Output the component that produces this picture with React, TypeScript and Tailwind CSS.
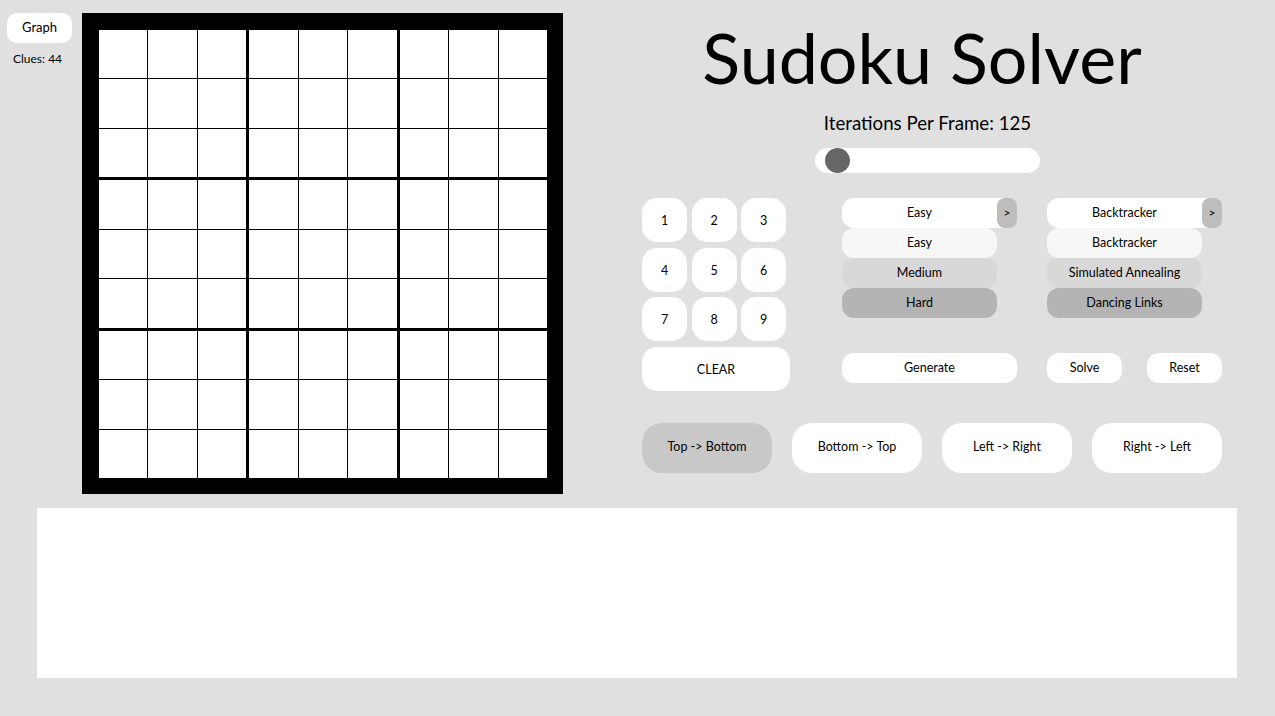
import React from 'react';

const nums = [1, 2, 3, 4, 5, 6, 7, 8, 9];

function Board() {
    return (
        <div className="w-[481px] h-[481px] bg-black pl-[17px] pt-[17px] pr-[16px] pb-[16px]">
            <div className="grid grid-cols-3 gap-[3px] w-[448px] h-[448px]">
                {Array.from({ length: 9 }).map((_, b) => (
                    <div key={b} className="grid grid-cols-3 grid-rows-3 gap-px">
                        {Array.from({ length: 9 }).map((_, c) => (
                            <div key={c} className="bg-white" />
                        ))}
                    </div>
                ))}
            </div>
        </div>
    );
}

function Dropdown({ value, options }: { value: string; options: string[] }) {
    const shades = ['bg-[#f7f7f7]', 'bg-[#d8d8d8]', 'bg-[#b4b4b4]'];
    return (
        <div className="w-[175px]">
            <div className="relative h-[30px] bg-white rounded-[12px] flex items-center">
                <span className="w-[155px] text-center">{value}</span>
                <span className="absolute right-0 top-0 w-[20px] h-[30px] bg-[#bdbdbd] rounded-[8px] flex items-center justify-center text-[12px]">
                    &gt;
                </span>
            </div>
            {options.map((o, i) => (
                <div
                    key={o}
                    className={`w-[155px] h-[30px] rounded-[12px] flex items-center justify-center ${shades[i]}`}
                >
                    {o}
                </div>
            ))}
        </div>
    );
}

export default function App() {
    const dirs = ['Top -> Bottom', 'Bottom -> Top', 'Left -> Right', 'Right -> Left'];

    return (
        <div className="w-[1275px] h-[716px] bg-[#e0e0e0] text-black font-['Lato',sans-serif] overflow-hidden">
            <div className="flex pt-[13px]">
                {/* Left column */}
                <div className="w-[82px] pl-[7px]">
                    <button className="w-[65px] h-[30px] bg-white rounded-[10px] text-[13px]">Graph</button>
                    <div className="mt-[7px] pl-[6px] text-[12px]">Clues: 44</div>
                </div>

                <Board />

                {/* Controls */}
                <div className="ml-[79px] w-[580px] flex flex-col">
                    <h1 className="pr-[20px] text-center text-[70px] leading-[88px] font-normal">Sudoku Solver</h1>
                    <div className="pr-[9px] mt-[10px] text-center text-[18.7px] leading-[24px]">Iterations Per Frame: 125</div>
                    <div className="ml-[173px] mt-[13px] w-[225px] h-[25px] bg-white rounded-full relative">
                        <div className="absolute left-[10px] top-0 w-[25px] h-[25px] rounded-full bg-[#666666]" />
                    </div>

                    <div className="flex mt-[25px] text-[12.5px]">
                        <div className="w-[148px]">
                            <div className="grid grid-cols-[45px_45px_45px] auto-rows-[44px] gap-x-[4.5px] gap-y-[5.5px]">
                                {nums.map(n => (
                                    <button key={n} className="bg-white rounded-[15px] leading-[46px]">{n}</button>
                                ))}
                            </div>
                            <button className="mt-[5.5px] w-[148px] h-[44px] bg-white rounded-[15px] leading-[46px]">CLEAR</button>
                        </div>

                        <div className="ml-[52px] flex flex-col">
                            <Dropdown value="Easy" options={['Easy', 'Medium', 'Hard']} />
                            <button className="mt-[35px] w-[175px] h-[30px] bg-white rounded-[12px]">Generate</button>
                        </div>

                        <div className="ml-[30px] flex flex-col">
                            <Dropdown value="Backtracker" options={['Backtracker', 'Simulated Annealing', 'Dancing Links']} />
                            <div className="mt-[35px] flex gap-[25px]">
                                <button className="w-[75px] h-[30px] bg-white rounded-[12px]">Solve</button>
                                <button className="w-[75px] h-[30px] bg-white rounded-[12px]">Reset</button>
                            </div>
                        </div>
                    </div>

                    <div className="flex gap-[20px] mt-[32px] text-[12.5px]">
                        {dirs.map((d, i) => (
                            <button
                                key={d}
                                className={`w-[130px] h-[50px] rounded-[20px] ${i === 0 ? 'bg-[#c8c8c8]' : 'bg-white'}`}
                            >
                                {d}
                            </button>
                        ))}
                    </div>
                </div>
            </div>

            <div className="ml-[37px] mt-[14px] w-[1200px] h-[170px] bg-white" />
        </div>
    );
}
